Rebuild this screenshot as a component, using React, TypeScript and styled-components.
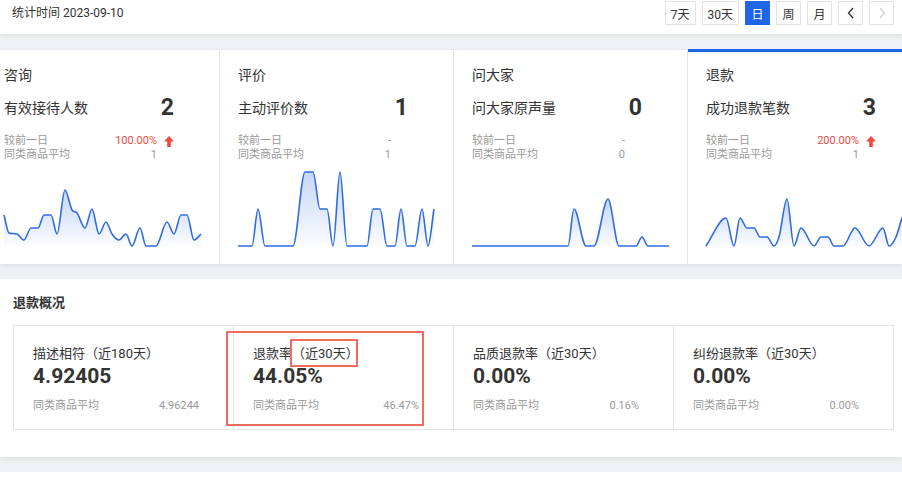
import React from "react"
import styled, { createGlobalStyle } from "styled-components"

const GlobalStyle = createGlobalStyle`
	html, body {
		margin: 0;
		padding: 0;
		background: #eef0f3;
		font-family: Roboto, "Noto Sans CJK SC", sans-serif;
		color: #333;
		overflow: hidden;
	}
`

type Point = [number, number]

interface Metric
{
	group: string
	label: string
	value: string
	compare: string
	trend?: "up"
	average: string
	points: Point[]
	active?: boolean
}

const metrics: Metric[] = [
	{
		group: "咨询", label: "有效接待人数", value: "2", compare: "100.00%", trend: "up", average: "1",
		points: [[0, 45], [5, 63], [13, 64], [20, 70], [27, 58], [34, 58], [40, 45], [47, 45], [53, 64], [61, 20], [68, 40], [73, 43], [81, 58], [88, 39], [95, 64], [102, 52], [108, 64], [115, 70], [122, 64], [128, 76], [136, 58], [142, 76], [152, 76], [163, 52], [170, 64], [177, 45], [183, 45], [190, 70], [197, 64]],
	},
	{
		group: "评价", label: "主动评价数", value: "1", compare: "-", average: "1",
		points: [[0, 76], [14, 76], [20, 39], [27, 76], [55, 76], [67, 2], [75, 2], [82, 39], [89, 39], [95, 76], [102, 2], [109, 76], [129, 76], [135, 39], [142, 39], [149, 76], [157, 76], [163, 39], [169, 76], [177, 76], [184, 39], [190, 76], [196, 39]],
	},
	{
		group: "问大家", label: "问大家原声量", value: "0", compare: "-", average: "0",
		points: [[0, 76], [96, 76], [102, 39], [114, 76], [122, 76], [136, 29], [147, 76], [164, 76], [170, 67], [176, 76], [197, 76]],
	},
	{
		group: "退款", label: "成功退款笔数", value: "3", compare: "200.00%", trend: "up", average: "1", active: true,
		points: [[0, 76], [20, 48], [28, 76], [34, 48], [41, 58], [48, 58], [54, 67], [61, 67], [68, 76], [73, 67], [81, 29], [88, 76], [95, 58], [108, 76], [115, 67], [122, 67], [128, 76], [137, 76], [149, 58], [163, 76], [177, 58], [183, 76], [190, 67], [196, 48], [205, 30]],
	},
]

const refunds = [
	{ title: "描述相符", period: "（近180天）", value: "4.92405", average: "4.96244" },
	{ title: "退款率", period: "（近30天）", value: "44.05%", average: "46.47%" },
	{ title: "品质退款率", period: "（近30天）", value: "0.00%", average: "0.16%" },
	{ title: "纠纷退款率", period: "（近30天）", value: "0.00%", average: "0.00%" },
]

const ranges = ["7天", "30天", "日", "周", "月"]

// monotone cubic through the points (same idea as d3 curveMonotoneX)
function smoothPath(points: Point[]): string
{
	const n = points.length
	const slopes: number[] = []
	for (let i = 0; i < n - 1; i++)
		slopes.push((points[i + 1][1] - points[i][1]) / (points[i + 1][0] - points[i][0]))

	const tangents: number[] = []
	for (let i = 0; i < n; i++)
	{
		if (i === 0) tangents.push(slopes[0])
		else if (i === n - 1) tangents.push(slopes[n - 2])
		else
		{
			const a = slopes[i - 1]
			const b = slopes[i]
			if (a * b <= 0) tangents.push(0)
			else
			{
				const m = (a + b) / 2
				const lim = 3 * Math.min(Math.abs(a), Math.abs(b))
				tangents.push(Math.sign(m) * Math.min(Math.abs(m), lim))
			}
		}
	}

	let d = `M${points[0][0]},${points[0][1]}`
	for (let i = 0; i < n - 1; i++)
	{
		const [x0, y0] = points[i]
		const [x1, y1] = points[i + 1]
		const h = (x1 - x0) / 3
		d += ` C${(x0 + h).toFixed(1)},${(y0 + tangents[i] * h).toFixed(1)} ${(x1 - h).toFixed(1)},${(y1 - tangents[i + 1] * h).toFixed(1)} ${x1},${y1}`
	}
	return d
}

const Page = styled.div`
	display: flex;
	flex-direction: column;
	gap: 15px;
	width: 902px;
	height: 479px;
	overflow: hidden;
`

const TopBar = styled.header`
	height: 34px;
	background: #fff;
	box-shadow: 0 2px 4px rgba(0, 0, 0, 0.06);
	display: flex;
	align-items: flex-start;
	justify-content: space-between;
	padding: 1px 8px 0 12px;
	box-sizing: border-box;
	flex-shrink: 0;
`

const StatTime = styled.span`
	font-size: 12px;
	line-height: 24px;
	color: #333;
`

const RangeGroup = styled.div`
	display: flex;
	gap: 6px;
`

const RangeButton = styled.button<{ $active?: boolean; $disabled?: boolean }>`
	height: 24px;
	min-width: 25px;
	padding: 0 5px;
	margin: 0;
	box-sizing: border-box;
	border: 1px solid ${p => (p.$active ? "#1f66e5" : "#e3e3e3")};
	background: ${p => (p.$active ? "#1f66e5" : "#fff")};
	color: ${p => (p.$active ? "#fff" : p.$disabled ? "#c8c8c8" : "#333")};
	font-family: Roboto, "Noto Sans CJK SC", sans-serif;
	font-size: 12px;
	display: flex;
	align-items: center;
	justify-content: center;
	cursor: pointer;
`

const Panel = styled.section`
	background: #fff;
	box-shadow: 0 2px 4px rgba(0, 0, 0, 0.06);
	position: relative;
	flex-shrink: 0;
`

const CardRow = styled.div`
	display: flex;
	margin-left: -14px;
	border-top: 1px solid #e6ebf1;
`

const Card = styled.div<{ $active?: boolean }>`
	width: 234px;
	flex-shrink: 0;
	box-sizing: border-box;
	border-right: 1px solid #dfe5ec;
	border-top: 3px solid ${p => (p.$active ? "#1f66e5" : "transparent")};
	margin-top: -1px;
	padding: 13px 0 16px 18px;
	display: flex;
	flex-direction: column;
`

const CardTitle = styled.div`
	font-size: 14px;
	line-height: 20px;
	color: #333;
`

const MetricRow = styled.div`
	width: 170px;
	margin-top: 7px;
	height: 30px;
	display: flex;
	align-items: center;
	justify-content: space-between;
`

const MetricLabel = styled.span`
	font-size: 14px;
	color: #333;
`

const MetricValue = styled.span`
	font-size: 23px;
	font-weight: 700;
	color: #333;
`

const CompareBlock = styled.div`
	margin-top: 12px;
	width: 170px;
	display: flex;
	flex-direction: column;
`

const CompareRow = styled.div`
	display: flex;
	align-items: center;
	font-size: 11px;
	line-height: 14px;
	color: #999;
`

const CompareLabel = styled.span`
	flex: 1;
`

const CompareValue = styled.span<{ $up?: boolean }>`
	color: ${p => (p.$up ? "#f0483e" : "#999")};
`

const ArrowSlot = styled.span`
	width: 17px;
	display: flex;
	justify-content: flex-end;
`

const Chart = styled.svg`
	display: block;
	margin-top: 8px;
	overflow: visible;
`

const SectionTitle = styled.h2`
	margin: 0;
	padding: 16px 13px 0;
	font-size: 13px;
	line-height: 16px;
	font-weight: 700;
	color: #333;
`

const RefundGrid = styled.div`
	margin: 14px 8px 27px 13px;
	display: grid;
	grid-template-columns: repeat(4, 220px);
	border: 1px solid #e5e5e5;
	border-right: none;
`

const RefundCell = styled.div`
	border-right: 1px solid #e5e5e5;
	padding: 19px 34px 16px 19px;
	display: flex;
	flex-direction: column;
`

const RefundTitle = styled.div`
	font-size: 13px;
	line-height: 18px;
	color: #333;
`

const RefundValue = styled.div`
	font-size: 21px;
	font-weight: 700;
	line-height: 26px;
	color: #333;
`

const RefundFoot = styled.div`
	margin-top: 10px;
	display: flex;
	justify-content: space-between;
	font-size: 11px;
	line-height: 14px;
	color: #999;
`

const Highlight = styled.div<{ $top: number; $left: number; $w: number; $h: number }>`
	position: absolute;
	top: ${p => p.$top}px;
	left: ${p => p.$left}px;
	width: ${p => p.$w}px;
	height: ${p => p.$h}px;
	box-sizing: border-box;
	border: 2px solid #f36b5c;
	pointer-events: none;
`

const Filler = styled.div`
	flex: 1;
	background: #fff;
`

function UpArrow()
{
	return (
		<svg width="10" height="11" viewBox="0 0 10 11">
			<path d="M5 0 L10 5.5 L6.8 5.5 L6.8 11 L3.2 11 L3.2 5.5 L0 5.5 Z" fill="#f0483e" />
		</svg>
	)
}

function Sparkline({ points, id }: { points: Point[]; id: string })
{
	const line = smoothPath(points)
	const last = points[points.length - 1]
	const area = `${line} L${last[0]},76 L${points[0][0]},76 Z`
	return (
		<Chart width="197" height="78" viewBox="0 0 197 78">
			<defs>
				<linearGradient id={id} x1="0" y1="0" x2="0" y2="1">
					<stop offset="0%" stopColor="#2f6be0" stopOpacity="0.28" />
					<stop offset="100%" stopColor="#2f6be0" stopOpacity="0.02" />
				</linearGradient>
			</defs>
			<path d={area} fill={`url(#${id})`} />
			<path d={line} fill="none" stroke="#2f6be0" strokeWidth="1.6" strokeLinejoin="round" />
		</Chart>
	)
}

function App()
{
	return (
		<>
			<GlobalStyle />
			<Page>
				<TopBar>
					<StatTime>统计时间 2023-09-10</StatTime>
					<RangeGroup>
						{ranges.map(r => (
							<RangeButton key={r} $active={r === "日"}>{r}</RangeButton>
						))}
						<RangeButton>
							<svg width="8" height="12" viewBox="0 0 8 12"><path d="M6 1 L1.5 6 L6 11" fill="none" stroke="#333" strokeWidth="1.4" /></svg>
						</RangeButton>
						<RangeButton $disabled>
							<svg width="8" height="12" viewBox="0 0 8 12"><path d="M2 1 L6.5 6 L2 11" fill="none" stroke="#cfcfcf" strokeWidth="1.4" /></svg>
						</RangeButton>
					</RangeGroup>
				</TopBar>

				<Panel>
					<CardRow>
						{metrics.map((m, i) => (
							<Card key={m.group} $active={m.active}>
								<CardTitle>{m.group}</CardTitle>
								<MetricRow>
									<MetricLabel>{m.label}</MetricLabel>
									<MetricValue>{m.value}</MetricValue>
								</MetricRow>
								<CompareBlock>
									<CompareRow>
										<CompareLabel>较前一日</CompareLabel>
										<CompareValue $up={m.trend === "up"}>{m.compare}</CompareValue>
										<ArrowSlot>{m.trend === "up" && <UpArrow />}</ArrowSlot>
									</CompareRow>
									<CompareRow>
										<CompareLabel>同类商品平均</CompareLabel>
										<CompareValue>{m.average}</CompareValue>
										<ArrowSlot />
									</CompareRow>
								</CompareBlock>
								<Sparkline points={m.points} id={`spark-${i}`} />
							</Card>
						))}
					</CardRow>
				</Panel>

				<Panel>
					<SectionTitle>退款概况</SectionTitle>
					<RefundGrid>
						{refunds.map(r => (
							<RefundCell key={r.title}>
								<RefundTitle>{r.title}{r.period}</RefundTitle>
								<RefundValue>{r.value}</RefundValue>
								<RefundFoot>
									<span>同类商品平均</span>
									<span>{r.average}</span>
								</RefundFoot>
							</RefundCell>
						))}
					</RefundGrid>
					<Highlight $top={52} $left={226} $w={198} $h={95} />
					<Highlight $top={60} $left={290} $w={68} $h={28} />
				</Panel>

				<Filler />
			</Page>
		</>
	)
}

export default App
